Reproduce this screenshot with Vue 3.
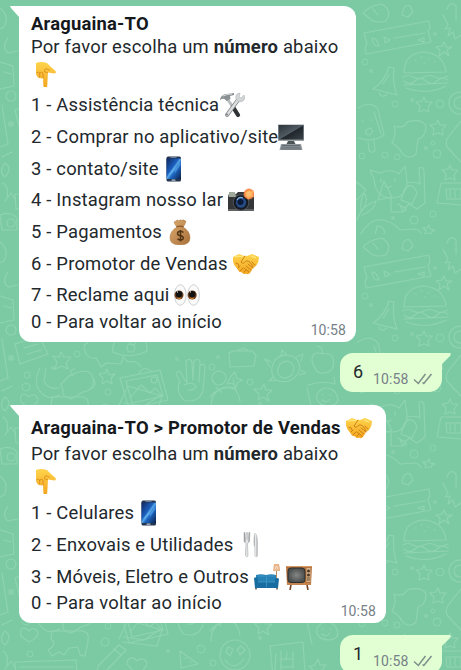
<script setup>
const messages = [
  {
    side: 'in',
    size: 'first',
    title: 'Araguaina-TO',
    rows: [
      { text: '1 - Assistência técnica', icons: ['tools'], tight: true },
      { text: '2 - Comprar no aplicativo/site', icons: ['monitor'], tight: true },
      { text: '3 - contato/site', icons: ['phone'] },
      { text: '4 - Instagram nosso lar', icons: ['camera'] },
      { text: '5 - Pagamentos', icons: ['money'] },
      { text: '6 - Promotor de Vendas', icons: ['handshake'] },
      { text: '7 - Reclame aqui', icons: ['eyes'] },
    ],
    time: '10:58',
  },
  { side: 'out', text: '6', time: '10:58' },
  {
    side: 'in',
    size: 'second',
    title: 'Araguaina-TO > Promotor de Vendas',
    titleIcon: 'handshake',
    rows: [
      { text: '1 - Celulares', icons: ['phone'] },
      { text: '2 - Enxovais e Utilidades', icons: ['cutlery'] },
      { text: '3 - Móveis, Eletro e Outros', icons: ['couch', 'tv'] },
    ],
    time: '10:58',
  },
  { side: 'out', text: '1', time: '10:58' },
]
</script>

<template>
  <main class="chat">
    <svg class="wallpaper" width="461" height="670" aria-hidden="true">
      <defs>
        <pattern id="doodles" width="461" height="234" patternUnits="userSpaceOnUse">
          <g fill="none" stroke="#99dab8" stroke-width="1.1" stroke-linecap="round" stroke-linejoin="round" opacity=".62">
            <!-- ticket, burger, bell -->
            <path d="M364 33l65-12 1 7-2 3 3 11-65 12-1-7 2-3zM372 38q5 0 7 8-6 1-7-8M384 37l6 3-5 3zM394 38l31-5M418 40l6-2v4z" />
            <path d="M404 73q0-20 20-21 20 2 22 20zM403 77q5-3 10 0t11 0 11 0 13-1M404 81q6 5 11 0t11 0 11 0 11-1M404 85l44-2M406 88q20 8 40-2M415 60l1 0M421 57l1 0M428 59l1 0M434 62l1 0M424 63l1 0" />
            <path d="M373 89q12-8 16-22l5 1q-2 15 3 27zM379 93q3 6 8 1M383 84l6-9" />
            <!-- ice pop, cloud, cat -->
            <path d="M358 108q12-8 20 1l6 26q-12 8-25 3M368 142l1 9q4 3 6-1l-1-9M374 112l7 22M366 130l4-2 3 3-3 4-4-1zM362 121h1M371 120h1" />
            <path d="M394 126q10 3 13-4 15-4 19 4 0 11-8 13l-2 15q-7 7-14-1-3-6-10-10 5-9 2-17" />
            <path d="M374 179l-4-9 10 3q12-5 19 1l6-8 2 15q0 17-16 17-16-1-17-19M407 183q9-2 13 1l-1-16q4-2 5 3l1 32-8 6-8-5-4 4-7-4M391 199v13h12l-3-7M381 179v3M395 178v3M385 186l3 2 3-2" />
            <!-- dinosaur, plants and cake -->
            <path d="M360 235q10-17 23-15 10 2 17 10l15-1q7 2 6 7M377 226l5 1 3 5-4 7-6-3zM363 13q6-7 19-9 11 7 4 17-12 3-17-3zM373 9l5 6M379 246q12 7 2 12-8 0-8-9z" />
            <path d="M357 220q5-15 19-19-1 9-14 14M361 210q-1-10 3-17 5 5 0 14" />
            <path d="M447 9q3-9 9-3v14M443 15l5 10-3 4 5-1-2 8 5-4 2 7 6-4M449 136l12-15M447 147l14 15M449 136q-4 5-2 11" />
            <path d="M461 183h-20l-4 20 24 2M446 189h15v10h-14zM450 190v7M455 190v7" />
            <circle cx="460" cy="103" r="11" /><circle cx="460" cy="103" r="6" />
            <path d="M424 97l2 5 6 0-4 5 1 5-5-2-5 2 1-6-4-4 6-1zM438 120l2 5 6 0-4 5 1 5-5-2-5 2 1-6-4-4 6-1zM450 165l2 5 6 0-4 5 1 5-5-2-5 2 1-6-4-4 6-1zM444 42l2 5 6 0-5 3 2 6-5-4-5 4 1-6-4-3 6-1zM429 225l1 4 5 1-4 2 1 4-4-3-4 2 2-4-3-3 4 0z" />
            <path d="M403 10q2-6 7-4l3 6-5 5-6-2z" />
            <!-- letter, star, whale and boot -->
            <path d="M15 110l24-8 9 18-28 10zM24 114l14-4M27 120l14-4M61 118l3 5 7 0-5 6 2 6-6-3-7 3 2-7-4-6 6 1z" />
            <path d="M92 101q-3 8-8 10 1 15 12 13l5 9 5-4 15 1 2-7 5 5q9-2 13 5M119 101q-8 10-6 17 16 8 34-1 0-11-5-16M129 107q4 9 7 0" />
            <circle cx="131" cy="114" r="4" />
            <path d="M40 134q-5 10-3 18 8 17 23 9M46 134l-2 13q4 9 15 7M61 150l8-8q17-9 23-1 5 15-9 17l-12 7q-10-2-8-9zM73 142q-6-6 2-7M93 144q5 7-2 11" />
            <path d="M107 135l2 6 6-1-4 4 1 6-5-3-5 3 1-6-4-4 6-1z" />
            <!-- picture and hand -->
            <path d="M120 144l40-8 8 30-39 9zM126 147l31-6 6 21-31 7zM130 164l11-13 9 8 5-5 8 9M139 139q5-8 12-2" />
            <circle cx="154" cy="146" r="3" />
            <path d="M180 148l-4-9q4-5 7 4l4 6-1-22q4-4 6 1l1 18 1-19q5-4 6 1l-1 20 1-17q5-2 5 2l-2 24q-5 13-19 9-8-7-5-17zM184 151q8-4 12 1-2 5-8 4" />
            <!-- people, small camera, wreath, apple -->
            <circle cx="219" cy="144" r="7" /><path d="M211 173q0-13 9-18 16-8 20 12M216 153l5 5M231 142l4-4 1 6 6 2-5 3-1 5-4-5-5 1z" />
            <path d="M229 119l4-2 19 0 4 4-2 11-24 1zM238 116l6-2 4 3" />
            <path d="M275 126q8-8 19-3 8 5 5 15-9 14-23 8-8-8-1-20M280 130q9-7 14 3-1 12-11 11-9-4-3-14M271 128l-6-3 5 8M281 121l1-5 5 5M296 123l7-3-2 7M301 136l5 3-7 2M273 143l-4 4 8-1M264 150l2 6 6 0-5 5 2 6-6-4-5 3 1-6-5-5 7 0z" />
            <path d="M323 120q-11-4-11 7 4 14 12 12 12-1 9-15-3-6-10-4M323 120q-1-8-6-8" />
            <path d="M308 151q14-5 27-1l-1-7M307 154l5 22M329 172q-14-1-12-12 8-11 18-2 8 12-6 14M322 161h1M330 161h1M322 166q4 4 8-1" />
            <!-- lower row -->
            <path d="M5 177q8-9 0-14-7 9 0 14M29 174l-8-6q-2-8 4-8l4 3q5-6 9 2 0 5-9 9M48 182q10-6 3-11l1-8h25q13-2 11 10l-3 15-5-1-2-8-9 1-5 7-5-3-7 4z" />
            <path d="M119 171l9-19 34 10-5 16-34-4M124 169l20 3 17-11M98 198l21-21 7 5-20 21-9 1zM114 181l7 6M137 207l-10-11q0-7 7-6l3 3q7-5 10 2 0 5-10 12M180 183l18 13-17 4zM185 190h1M190 194h1" />
            <circle cx="235" cy="187" r="15" /><path d="M226 184l2-5 5 2-3 7zM237 182l4-4 4 4-5 5zM225 192q9 12 19-1M270 178l33-4 2 31-32 3zM276 186l-1 16M281 183v20M287 184l-1 8M293 184v16M280 191h13M281 199h13" />
            <path d="M15 194l61-2 1 15-61 2zM20 199h53M210 163q9-12 25-8l-2-11M318 191l2 6 6 0-4 5 1 6-6-3-5 3 1-6-4-4 6-1zM345 193l12-11 9 8-9 10zM384 181l8 16-14 3zM404 190q8-10 13 3l-5 11-11-4z" />
            <!-- left margin -->
            <path d="M0 8q10 8 4 19l-4 2M8 38q-7 9 0 15l10-2M0 62l13 4 1 20-14 3M4 72l7 2M2 105l6 39-8 3M2 157l10-5M0 215q11-4 17 3v12H2zM5 201l6-8 4 6M3 183q6 4 4 14" />
            <circle cx="11" cy="96" r="5" /><circle cx="11" cy="223" r="4" />
          </g>
          <g fill="none" stroke="#99dab8" opacity=".55">
            <circle cx="365" cy="62" r="3" /><circle cx="385" cy="155" r="3" /><circle cx="397" cy="157" r="3" /><circle cx="440" cy="104" r="4" />
            <circle cx="437" cy="154" r="4" /><circle cx="414" cy="220" r="4" /><circle cx="395" cy="104" r="3" /><circle cx="433" cy="143" r="2" />
            <circle cx="27" cy="141" r="3" /><circle cx="26" cy="153" r="4" /><circle cx="77" cy="120" r="3" /><circle cx="108" cy="158" r="3" />
            <circle cx="212" cy="133" r="3" /><circle cx="250" cy="148" r="3" /><circle cx="105" cy="174" r="4" /><circle cx="30" cy="186" r="3" />
            <circle cx="201" cy="181" r="4" /><circle cx="213" cy="195" r="3" /><circle cx="433" cy="214" r="3" /><circle cx="362" cy="156" r="3" />
          </g>
          <g fill="#99dab8" opacity=".45">
            <circle cx="371" cy="71" r="2" /><circle cx="435" cy="34" r="2" /><circle cx="412" cy="100" r="2" /><circle cx="426" cy="148" r="2" />
            <circle cx="11" cy="124" r="3" /><circle cx="53" cy="134" r="2" /><circle cx="177" cy="125" r="2" /><circle cx="218" cy="123" r="2" />
            <circle cx="168" cy="183" r="2" /><circle cx="260" cy="170" r="2" /><circle cx="393" cy="218" r="2" /><circle cx="405" cy="210" r="2" />
          </g>
        </pattern>
      </defs>
      <rect width="461" height="670" fill="#7ccaa3" />
      <rect width="461" height="670" fill="url(#doodles)" />
    </svg>

    <svg class="sprites" aria-hidden="true">
      <linearGradient id="gold" x2="0" y2="1"><stop stop-color="#ffd44d" /><stop offset="1" stop-color="#f2a51f" /></linearGradient>
      <linearGradient id="screen" x2="1" y2="1"><stop stop-color="#10275c" /><stop offset=".42" stop-color="#1b5fc0" /><stop offset=".5" stop-color="#5aa9e4" /><stop offset=".6" stop-color="#1d68c8" /><stop offset="1" stop-color="#0c2048" /></linearGradient>
      <linearGradient id="glass" x2="1" y2="1"><stop stop-color="#2c3238" /><stop offset=".5" stop-color="#515b63" /><stop offset=".53" stop-color="#20262b" /><stop offset="1" stop-color="#3b444b" /></linearGradient>
      <linearGradient id="steel" x2="1" y2="0"><stop stop-color="#8b8f92" /><stop offset=".5" stop-color="#f4f5f6" /><stop offset="1" stop-color="#85898c" /></linearGradient>
      <linearGradient id="sack" x2="1" y2="1"><stop stop-color="#dcac70" /><stop offset="1" stop-color="#a86f39" /></linearGradient>
      <radialGradient id="flash"><stop stop-color="#fffbd5" /><stop offset=".35" stop-color="#ffc269" /><stop offset=".75" stop-color="#f6803f" /><stop offset="1" stop-color="#f6803f" stop-opacity="0" /></radialGradient>
      <radialGradient id="tube"><stop stop-color="#858786" /><stop offset="1" stop-color="#4b4f4e" /></radialGradient>

      <symbol id="hand" viewBox="0 0 26 26">
        <path d="M4 2q5-2 11 0l4 4 4.500 4q1 2-1 2.500l-6.500-1-.8 14q-1.900 2-3.800 0L11 17q-1 1-2.600 0-1.500.5-2.900-1-2-2-1.500-7z" fill="url(#gold)" />
        <path d="M7.700 12v4.500M11 12v5M15.800 11.500l-3-.5q-1-2 1-3.400l4 1.600M4.500 12q2-1.700 3.200 0 1.700-1.500 3.300 0" fill="none" stroke="#d78616" stroke-width=".8" />
      </symbol>
      <symbol id="tools" viewBox="0 0 26 26">
        <path d="M7 5L20 24" stroke="#b9bdbf" stroke-width="3" /><path d="M14 15l5 8" stroke="#2f3335" stroke-width="4.200" stroke-linecap="round" />
        <path d="M1 7q2-5 7-5l7-1v2l-4 1 .5 3-4 2-2-2q-2-1-4.500 1z" fill="#8b9092" /><path d="M4 4q4-2 9-2" stroke="#d8dbdc" fill="none" />
        <path d="M19 8L8 23" stroke="#888c8e" stroke-width="4" stroke-linecap="round" /><path d="M19 8L8 23" stroke="#dcdfe0" stroke-width="2.400" stroke-linecap="round" />
        <path d="M18 2q-2 2-1 5l3 3q5 0 6-4l-1-3-3 3-2-1 1-4z" fill="#d3d6d7" stroke="#a2a8aa" stroke-width=".5" /><circle cx="8" cy="22.500" r="1" fill="#77797a" />
      </symbol>
      <symbol id="monitor" viewBox="0 0 26 26">
        <path d="M0 .5h26V17H0z" fill="#9aa1a5" /><path d="M.6 1h24.800v14.600H.6z" fill="url(#glass)" /><path d="M10 17h6l1.500 3h-9z" fill="#4d5458" />
        <path d="M3 20h20l1.500 6h-23z" fill="#92999e" /><path d="M4 21.500h18M3.500 23.200h19M3 25h20" stroke="#636a70" stroke-width="1" />
      </symbol>
      <symbol id="phone" viewBox="3.500 0 26 26">
        <rect x="6" y=".5" width="14.500" height="25" rx="1.500" fill="#26354e" /><path d="M6 2.500h14.500v20.500H6z" fill="url(#screen)" /><path d="M8 18l7-8-1 4 6-8v3l-6 9 1-4-7 6z" fill="#68b6ef" opacity=".5" />
        <path d="M10 1.500h6" stroke="#849cb7" stroke-width=".7" /><rect x="11" y="23.500" width="4" height="1.200" rx=".5" fill="#b4c9da" />
      </symbol>
      <symbol id="camera" viewBox="0 0 26 26">
        <path d="M0 9q0-2 2-2h6l2-2h9l2 2h3q2 0 2 2v15H0z" fill="#343638" /><path d="M0 9h26M0 23h26" stroke="#8b8e8d" stroke-width="1" /><path d="M1 5h6l1 5H1z" fill="#a0aa9c" />
        <circle cx="13" cy="15.500" r="7.800" fill="#15191e" stroke="#4c545c" /><circle cx="13" cy="15.500" r="5.200" fill="#244b86" /><circle cx="12.500" cy="15" r="3" fill="#0b1a36" /><path d="M9 13q2-4 6-2" stroke="#8ab5e3" stroke-width="1.200" fill="none" />
        <circle cx="21" cy="7" r="6" fill="url(#flash)" /><path d="M21 0l1 5 4-2-2 4 2 3-4-1-2 4-1-4-4 1 4-2-2-3 4 1z" fill="#ffb765" opacity=".8" />
      </symbol>
      <symbol id="money" viewBox="0 0 26 26">
        <path d="M9 2q1-2 3 0 1-2 3-.5 2-1.500 3 .5l1 0q-1 4-3 6 7 4 7 11 0 7-10 7T3 19Q3 12 10 8q-2-2-3-5z" fill="url(#sack)" stroke="#a87339" stroke-width=".5" />
        <path d="M9.500 8q4-1.800 7 0" stroke="#8b5528" stroke-width="1.300" fill="none" /><path d="M16.500 13.500q-3-2-5.300-.5-1.900 2.500 1.300 3.500 5 .8 3.500 3.500-2 2-5.500 0M13.500 11v11.500" fill="none" stroke="#513414" stroke-width="1.500" />
      </symbol>
      <symbol id="handshake" viewBox="0 0 26 26">
        <path d="M0 6l6-3 5 2 3 0 5-2 7 3q0 5-3 9l-3 2-3 5q-2 2-4 .5-2 1.500-4-1l-3-1-2-3Q-1 13 0 6" fill="url(#gold)" />
        <path d="M12 5L8 11q2 3 5-1 4-1 7 6M7 15l-2 2M10 17l-3 3M13 19l-2 2M13 15l5 4M15 13l5 4M11 17l5 4M3 12q3 0 3 3M22 14q-2-1-3-3" fill="none" stroke="#c87915" stroke-width=".9" stroke-linecap="round" /><path d="M2 6l4-1 4 1M18 5l5 2" stroke="#ffeb86" stroke-width="1.200" fill="none" />
      </symbol>
      <symbol id="eyes" viewBox="0 0 26 26">
        <ellipse cx="6.300" cy="13" rx="5.800" ry="10.300" fill="#fafafa" stroke="#cfd0d2" /><ellipse cx="19.600" cy="13" rx="5.800" ry="10.300" fill="#fafafa" stroke="#cfd0d2" />
        <circle cx="5" cy="13" r="4.500" fill="#70401d" /><circle cx="18.200" cy="13" r="4.500" fill="#70401d" /><circle cx="5" cy="12.300" r="3.200" fill="#111" /><circle cx="18.200" cy="12.300" r="3.200" fill="#111" /><path d="M3 16q2 1 4 0M16 16q2 1 4 0" stroke="#d98a30" fill="none" /><path d="M3 10h1M16 10h1" stroke="#fff" />
      </symbol>
      <symbol id="cutlery" viewBox="0 0 26 26">
        <path d="M6 .5h1l.5 7h.5L8.500.5h1l.3 7h.5l.6-7h1l-.4 9-2 2 .5 12q-1 3-2.500 0l.5-12-2-2z" fill="url(#steel)" stroke="#9fa2a4" stroke-width=".5" />
        <path d="M17 1q3 1 2.500 14v9q-1.300 2-2.700 0V14H16q-.5-11 1-13" fill="url(#steel)" stroke="#c4c6c8" stroke-width=".5" />
      </symbol>
      <symbol id="couch" viewBox="0 0 26 26">
        <path d="M22.500 6v16" stroke="#b98b65" stroke-width="1" /><path d="M20 0h5l1.500 7h-7.500z" fill="#e7b58c" /><path d="M21 5.500l1.500-3.500L24 5.500" stroke="#fff0dc" fill="none" stroke-width=".7" />
        <path d="M2 11q5-1.500 10 0 5-1.500 10 0v11H2z" fill="#2682b5" /><path d="M0 14q3-2 4 1v3h17v-3q2-2 4 0l-1 9H1z" fill="#176d9f" /><path d="M4 18h17M12.500 11v12M3 12h8M14 12h7" stroke="#4298c5" stroke-width=".8" /><path d="M2 24v1.500M23 24v1.500" stroke="#4e3425" stroke-width="1.300" />
      </symbol>
      <symbol id="tv" viewBox="0 0 26 26">
        <path d="M5 21l-1 5M21 21l1 5" stroke="#774426" stroke-width="1.600" /><path d="M0 2h26l-1 19H1z" fill="#b5713e" /><path d="M.5 2.500h25M1 20h24" stroke="#d49b63" /><rect x="2" y="4" width="17" height="14.500" rx="3" fill="url(#tube)" stroke="#2c302e" />
        <path d="M20.500 4h4v14h-4z" fill="#d7b78b" /><circle cx="22.500" cy="7" r="1.500" fill="#4b3829" /><circle cx="22.500" cy="11" r="1.500" fill="#4b3829" /><path d="M21 14h3M21 16h3" stroke="#644932" />
      </symbol>
    </svg>

    <section class="thread">
      <template v-for="(m, i) in messages" :key="i">
        <article v-if="m.side === 'in'" class="bubble incoming" :class="m.size">
          <div class="row title">
            <strong>{{ m.title }}</strong>
            <svg v-if="m.titleIcon" class="emoji"><use :href="'#' + m.titleIcon" /></svg>
          </div>
          <div class="row prompt"><span>Por favor escolha um <b>número</b> abaixo</span></div>
          <div class="row pointer"><svg class="emoji"><use href="#hand" /></svg></div>
          <div v-for="r in m.rows" :key="r.text" class="row" :class="{ tight: r.tight }">
            <span>{{ r.text }}</span>
            <svg v-for="icon in r.icons" :key="icon" class="emoji"><use :href="'#' + icon" /></svg>
          </div>
          <div class="row last"><span>0 - Para voltar ao início</span><time>{{ m.time }}</time></div>
        </article>
        <article v-else class="bubble outgoing">
          <span class="reply">{{ m.text }}</span>
          <time>{{ m.time }}</time>
          <svg class="checks" viewBox="0 0 20 12"><path d="M1 6.500l4.300 4L12.500 1M9.500 9.500l1.300 1L18.500 1" fill="none" stroke="#7e8f89" stroke-width="1.500" /></svg>
        </article>
      </template>
    </section>
  </main>
</template>

<style>
body { margin: 0; overflow: hidden; }
</style>

<style scoped>
.chat { display: grid; width: 461px; height: 670px; overflow: hidden; font-family: Roboto, "Liberation Sans", sans-serif; color: #22282c; }
.wallpaper, .thread { grid-area: 1 / 1; }
.wallpaper { display: block; }
.sprites { position: absolute; width: 0; height: 0; }
.thread { z-index: 1; display: flex; flex-direction: column; height: 670px; padding-top: 6px; box-sizing: border-box; }
.bubble { position: relative; box-sizing: border-box; flex: none; }
.incoming { margin-left: 19px; padding-left: 12px; padding-right: 10px; background: #fff; border-radius: 0 12px 12px 12px; }
.incoming::before { content: ""; position: absolute; left: -9px; top: 0; width: 10px; height: 12px; background: #fff; clip-path: polygon(0 0, 100% 0, 100% 100%, 9px 11px, 1px 2px); }
.first { width: 337px; height: 336px; padding-top: 6px; }
.second { width: 367px; height: 218px; padding-top: 7px; margin-top: 13px; }
.row { display: flex; align-items: center; height: 31.7px; gap: 5px; font-size: 18.4px; line-height: 22px; white-space: nowrap; letter-spacing: 0.2px; }
.tight { gap: 0; }
.first .title { height: 24px; }
.second .title { height: 31px; }
.prompt { height: 22px; }
.pointer { height: 31.3px; }
.second .pointer { height: 32.3px; }
.row.last { height: 22px; justify-content: space-between; }
.title strong { color: #15191d; }
b, strong { font-weight: 700; }
.emoji { width: 26px; height: 26px; flex: none; }
.emoji + .emoji { margin-left: 1px; }
.pointer .emoji { margin-left: 1px; }
time { font-size: 14px; line-height: 16px; letter-spacing: 0.1px; color: #768087; }
.last time { margin-top: 15px; }
.outgoing { display: flex; width: 102px; height: 39px; margin: 11px 0 0 340px; padding-left: 13px; background: #e2fed3; border-radius: 13px 0 13px 13px; }
.second + .outgoing { margin-top: 12px; }
.outgoing::before { content: ""; position: absolute; right: -9px; top: 0; width: 10px; height: 12px; background: #e2fed3; clip-path: polygon(0 0, 90% 0, 100% 1px, 9px 3px, 1px 11px, 0 12px); }
.reply { font-size: 18px; line-height: 22px; margin-top: 8px; width: 20px; }
.outgoing time { margin-top: 18px; width: 37px; }
.checks { width: 20px; height: 12px; margin: 20px 0 0 3px; }
</style>
